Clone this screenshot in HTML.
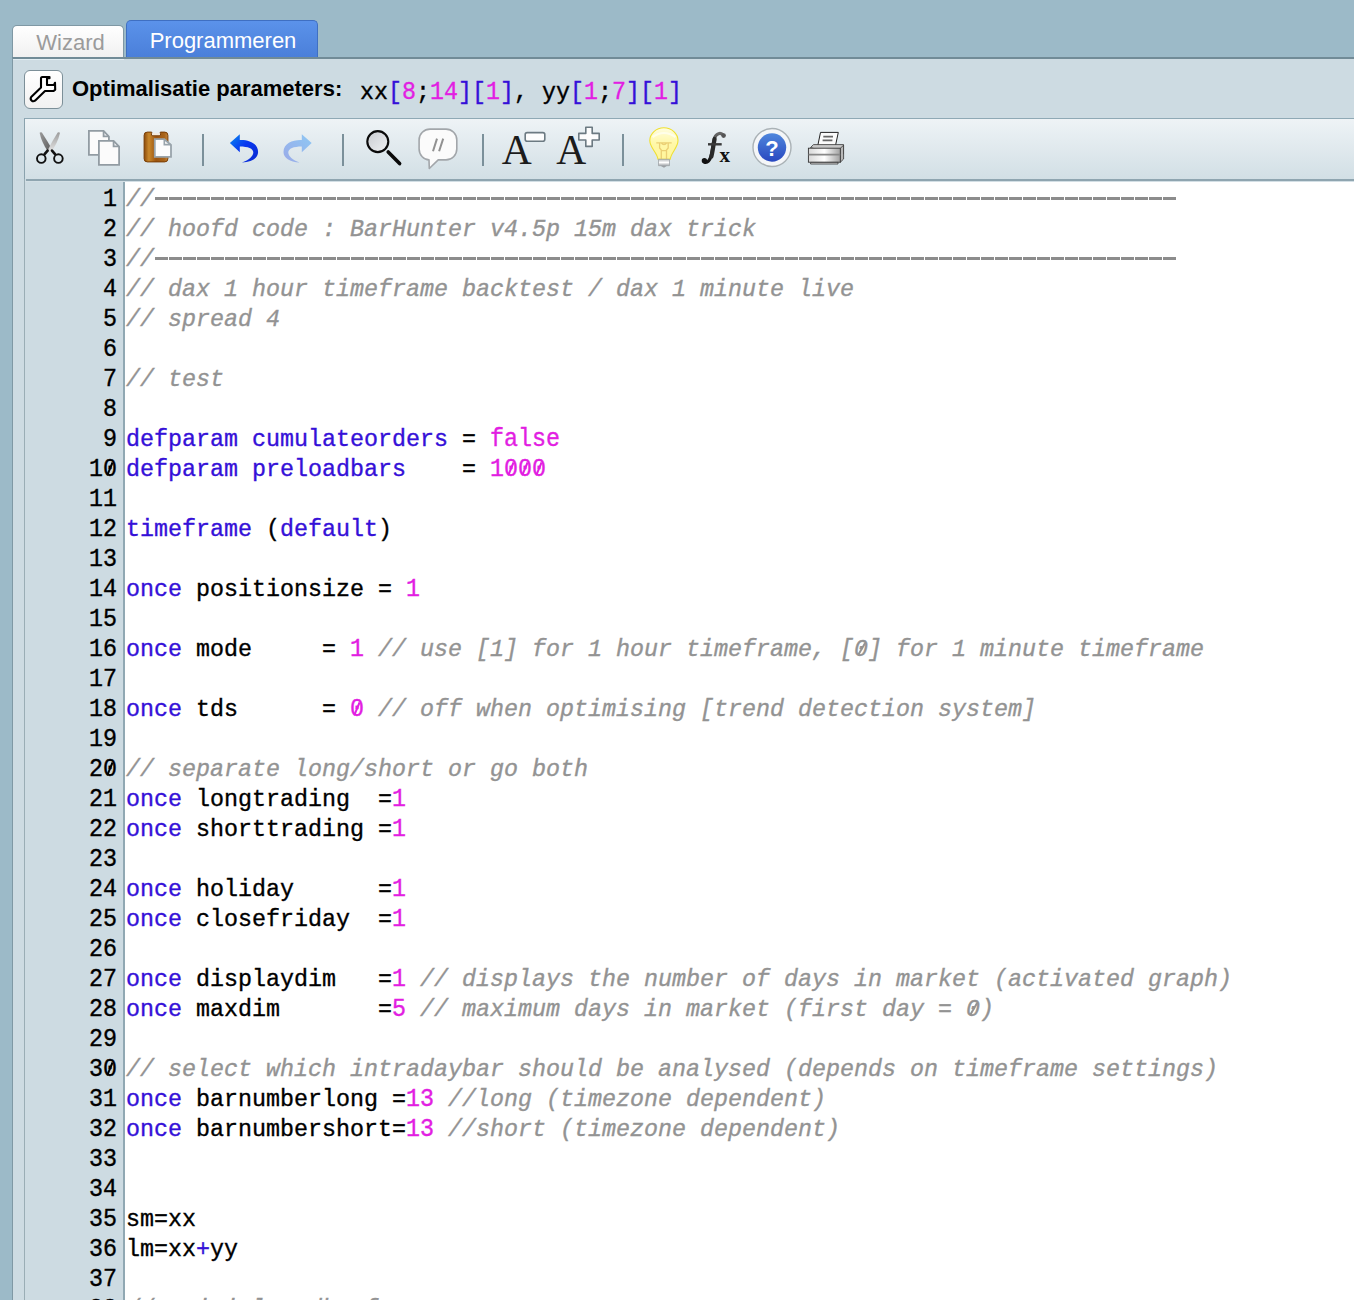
<!DOCTYPE html>
<html><head><meta charset="utf-8">
<style>
html,body{margin:0;padding:0;}
body{width:1354px;height:1300px;overflow:hidden;background:#9cbac8;position:relative;font-family:"Liberation Sans",sans-serif;}
.abs{position:absolute;}
#panel{left:12px;top:57px;right:0;bottom:0;background:#cddbe2;border-left:1px solid #7f98a4;border-top:2px solid #718b97;}
.tab{position:absolute;box-sizing:border-box;border-radius:5px 5px 0 0;text-align:center;font-size:22px;}
#tab1{left:12px;top:25px;width:112px;height:33px;background:linear-gradient(#ffffff,#f0f0f0);border:1px solid #7f98a4;border-bottom:none;color:#9b9b9b;line-height:34px;padding-left:5px;}
#tab2{left:126px;top:20px;width:192px;height:38px;background:linear-gradient(#5b92ea,#4a7fd9);border:1px solid #3f6fc2;border-bottom:none;color:#fff;line-height:40px;padding-left:2px;}
#wrench{left:24px;top:70px;width:39px;height:39px;box-sizing:border-box;border:1px solid #7c8f98;border-radius:6px;background:linear-gradient(#ffffff,#f1f1f1);}
#optlbl{left:72px;top:76px;font-size:22px;font-weight:bold;color:#000;white-space:pre;}
#params{left:360px;top:79.5px;font-family:"Liberation Mono",monospace;font-size:23.33px;white-space:pre;color:#000;}
#toolbar{left:24px;top:118px;right:0;height:61px;box-sizing:border-box;border-top:1px solid #8fa9b5;border-left:1px solid #8aa2ad;background:linear-gradient(#eef3f6,#d2dfe5);}
#tbline{left:26px;top:179px;right:0;height:2px;background:#8fa5b0;}
#tbline2{left:25px;top:181px;right:0;height:1px;background:#d3dfe5;}
#gutter{left:24px;top:179px;width:99px;bottom:0;background:#cddbe2;border-left:1px solid #9aadb5;box-sizing:border-box;}
#gline{left:123px;top:182px;width:2px;bottom:0;background:#90a8b3;}
#editor{left:125px;top:182px;right:0;bottom:0;background:#fff;}
.sep{position:absolute;top:134px;width:2px;height:32px;background:#7b909a;}
#nums{left:25px;top:184.5px;width:92px;text-align:right;font-family:"Liberation Mono",monospace;font-size:23.33px;color:#000;}
#code{left:126px;top:184.5px;font-family:"Liberation Mono",monospace;font-size:23.33px;color:#000;}
.ln{height:30px;line-height:30px;white-space:pre;}
.k{color:#3510d8;}
.n{color:#e21ee2;display:inline-block;transform:scaleY(1.08);transform-origin:0 72%;}
.z{position:relative;display:inline-block;}
.z::after{content:"";position:absolute;left:6.1px;top:7.5px;width:1.8px;height:12.5px;background:currentColor;transform:rotate(24deg);}
.c .z::after{left:7px;transform:rotate(30deg);}
#nums .ln{transform:scaleY(1.08);transform-origin:0 71%;}
.c{color:#939393;font-style:italic;}
.d{display:inline-block;vertical-align:top;width:1022px;height:30px;background-image:linear-gradient(90deg,#8c8c8c 12.6px,transparent 12.6px);background-size:14px 2.5px;background-position:1px 12.5px;background-repeat:repeat-x;}
#code,#nums,#params{-webkit-text-stroke:0.35px currentColor;}
</style></head><body>
<div id="tab1" class="tab">Wizard</div>
<div id="tab2" class="tab">Programmeren</div>
<div id="panel" class="abs"></div>
<div class="abs" style="left:13px;top:59px;width:111px;height:1px;background:#e2eef3"></div>
<div id="wrench" class="abs"><svg width="39" height="39" viewBox="0 0 39 39" style="position:absolute;left:-1px;top:-1px"><path d="M18.3 7 H25.5 V8.3 H23 V15 H30 L31 12.8 L31.2 19.6 L29.6 21 H21 L11 30.7 A2.7 2.7 0 0 1 7.2 27 L17 17.5 V8.6 Q17 7 18.3 7 Z" fill="#fff" stroke="#000" stroke-width="2.1" stroke-linejoin="round"/></svg></div>
<div id="optlbl" class="abs">Optimalisatie parameters:</div>
<div id="params" class="abs">xx<span class="k">[</span><span class="n">8</span>;<span class="n">14</span><span class="k">]</span><span class="k">[</span><span class="n">1</span><span class="k">]</span>, yy<span class="k">[</span><span class="n">1</span>;<span class="n">7</span><span class="k">]</span><span class="k">[</span><span class="n">1</span><span class="k">]</span></div>
<div id="gutter" class="abs"></div>
<div id="gline" class="abs"></div>
<div id="editor" class="abs"></div>
<div id="toolbar" class="abs"></div>
<div id="tbline" class="abs"></div>
<div id="tbline2" class="abs"></div>
<div class="sep" style="left:202px"></div>
<div class="sep" style="left:342px"></div>
<div class="sep" style="left:482px"></div>
<div class="sep" style="left:622px"></div>
<svg id="icons" class="abs" style="left:0;top:0" width="900" height="180" viewBox="0 0 900 180">
<defs>
<linearGradient id="gBladeL" x1="0" y1="0" x2="1" y2="1"><stop offset="0" stop-color="#9a9a9a"/><stop offset="1" stop-color="#5a5a5a"/></linearGradient>
<linearGradient id="gBladeR" x1="0" y1="0" x2="0" y2="1"><stop offset="0" stop-color="#9c9c9c"/><stop offset="1" stop-color="#e8e8e8"/></linearGradient>
<linearGradient id="gClip" x1="0" y1="0" x2="1" y2="0"><stop offset="0" stop-color="#8c4a0a"/><stop offset="0.2" stop-color="#c8882c"/><stop offset="0.5" stop-color="#9c5410"/><stop offset="0.85" stop-color="#a8641a"/><stop offset="1" stop-color="#c4843a"/></linearGradient>
<linearGradient id="gUndo" x1="0" y1="0" x2="1" y2="1"><stop offset="0" stop-color="#0a8cf0"/><stop offset="0.45" stop-color="#0838f0"/><stop offset="1" stop-color="#0a2ad0"/></linearGradient>
<linearGradient id="gRedo" x1="0" y1="0" x2="1" y2="1"><stop offset="0" stop-color="#8ec8f4"/><stop offset="1" stop-color="#9aaae8"/></linearGradient>
<linearGradient id="gLens" x1="0" y1="0" x2="1" y2="1"><stop offset="0" stop-color="#c8cbd0"/><stop offset="1" stop-color="#f0f2f4"/></linearGradient>
<linearGradient id="gBulb" x1="0" y1="0" x2="0" y2="1"><stop offset="0" stop-color="#fffde0"/><stop offset="0.5" stop-color="#fff8a8"/><stop offset="1" stop-color="#fff59a"/></linearGradient>
<linearGradient id="gBase" x1="0" y1="0" x2="0" y2="1"><stop offset="0" stop-color="#b8bcc0"/><stop offset="0.5" stop-color="#ffffff"/><stop offset="1" stop-color="#9ea2a6"/></linearGradient>
<linearGradient id="gHelp" x1="0" y1="0" x2="0" y2="1"><stop offset="0" stop-color="#4f86dc"/><stop offset="1" stop-color="#2848c0"/></linearGradient>
<linearGradient id="gPrint" x1="0" y1="0" x2="1" y2="0"><stop offset="0" stop-color="#d8d8d8"/><stop offset="0.5" stop-color="#ffffff"/><stop offset="1" stop-color="#a0a0a0"/></linearGradient>
<linearGradient id="gF" x1="0" y1="0" x2="0" y2="1"><stop offset="0" stop-color="#666"/><stop offset="1" stop-color="#111"/></linearGradient>
</defs>
<!-- scissors -->
<path d="M39.6,132.8 Q40.6,132 41.9,132.6 Q47.6,141.5 51.6,148.6 L48.0,151.8 Q41.6,142.5 39.6,132.8 Z" fill="url(#gBladeL)"/>
<path d="M60.0,132.8 Q59.0,132 57.7,132.6 Q52.0,141.5 47.6,150.4 L50.8,152.6 Q58.0,142.5 60.0,132.8 Z" fill="url(#gBladeR)"/>
<path d="M47.6,150.6 L44.6,154.2" stroke="#111" stroke-width="2.6" stroke-linecap="round"/>
<path d="M52.0,150.6 L55.0,154.2" stroke="#111" stroke-width="2.6" stroke-linecap="round"/>
<circle cx="41.3" cy="158.6" r="4.3" fill="none" stroke="#111" stroke-width="1.9"/>
<circle cx="58.4" cy="158.6" r="4.3" fill="none" stroke="#111" stroke-width="1.9"/>
<!-- copy -->
<path d="M88.9,130.9 H103.6 L108.9,136.6 V154.9 H88.9 Z" fill="#fbfbfb" stroke="#929ca3" stroke-width="1.8"/>
<path d="M103.6,130.9 V136.4 H108.9" fill="none" stroke="#929ca3" stroke-width="1.8"/>
<path d="M98.9,140.9 H113.6 L119.1,146.6 V164.9 H98.9 Z" fill="#fbfbfb" stroke="#929ca3" stroke-width="1.8"/>
<path d="M113.6,140.9 V146.4 H119.1" fill="none" stroke="#929ca3" stroke-width="1.8"/>
<!-- paste -->
<path d="M147.3,132.1 H151.2 Q152.6,132.1 151.6,133.6 Q150.6,135.6 152.8,135.8 H159.2 Q161.4,135.6 160.4,133.6 Q159.4,132.1 160.8,132.1 H164.7 Q167.9,132.1 167.9,135.3 V158.7 Q167.9,161.9 164.7,161.9 H147.3 Q144.1,161.9 144.1,158.7 V135.3 Q144.1,132.1 147.3,132.1 Z" fill="url(#gClip)" stroke="#7a3e06" stroke-width="1"/><path d="M152.4,133.2 H159.6 V135 H152.4 Z" fill="#f6eadc" opacity="0.9"/>
<path d="M154.8,139.2 H164.3 L171,145 V156.8 H154.8 Z" fill="#fcfcfc" stroke="#99a4ab" stroke-width="1.8"/>
<path d="M164.3,139.2 V144.6 H171" fill="none" stroke="#99a4ab" stroke-width="1.6"/>
<!-- undo -->
<path d="M229.9,143.1 L239.8,134.2 L239.8,140 C248,139.5 258.1,143 258.1,152 C258.1,158 252,162 241.9,162.5 C249,160 253.3,156 253.3,152.5 C253.3,148.5 248,146.5 239.8,146.5 L239.8,152.3 Z" fill="url(#gUndo)"/>
<!-- redo -->
<path transform="translate(541.6,0) scale(-1,1)" d="M229.9,143.1 L239.8,134.2 L239.8,140 C248,139.5 258.1,143 258.1,152 C258.1,158 252,162 241.9,162.5 C249,160 253.3,156 253.3,152.5 C253.3,148.5 248,146.5 239.8,146.5 L239.8,152.3 Z" fill="url(#gRedo)"/>
<!-- search -->
<circle cx="377.8" cy="141.6" r="10.5" fill="url(#gLens)" stroke="#0a0a0a" stroke-width="2.1"/>
<path d="M388.2,152 L399.6,163.6" stroke="#0a0a0a" stroke-width="3.6" stroke-linecap="round"/>
<!-- comment -->
<path d="M429,159.9 C424,159.9 419.1,155 419.1,149 V139.9 C419.1,134 424,129.1 430,129.1 H446 C452,129.1 456.8,134 456.8,140 V149 C456.8,155 452,159.9 446,159.9 H438.2 L429.3,168.5 Z" fill="#fbfbfb" stroke="#a2a6aa" stroke-width="1.6" stroke-linejoin="round"/>
<path d="M437,138.6 L433,151.3 M443.2,138.6 L439.1,151.3" stroke="#919191" stroke-width="2"/>
<!-- A- -->
<text x="501.8" y="164.3" font-family="Liberation Serif" font-size="41.5" fill="#1c1c1c">A</text>
<rect x="525.2" y="132.6" width="19.6" height="8.6" rx="2" fill="#fdfdfd" stroke="#6c7a82" stroke-width="1.6"/>
<!-- A+ -->
<text x="556.2" y="164.3" font-family="Liberation Serif" font-size="41.5" fill="#1c1c1c">A</text>
<path d="M585.8,127.3 H592.2 V133.4 H599.2 V140 H592.2 V146.4 H585.8 V140 H578.8 V133.4 H585.8 Z" fill="#fdfdfd" stroke="#6c7a82" stroke-width="1.6" stroke-linejoin="round"/>
<!-- bulb -->
<path d="M658,159.3 C657.2,152.5 649.8,148 649.8,140.6 A14.1,12.8 0 0 1 678,140.6 C678,148 670.8,152.5 670.2,159.3 Z" fill="url(#gBulb)" stroke="#efe030" stroke-width="1.1"/>
<path d="M652.5,137 Q664,129 675.5,137" fill="none" stroke="#fffff0" stroke-width="2.2" opacity="0.8"/>
<path d="M656.3,142.8 H671.7 M659.6,142.8 V148 L661.3,150 V159 M668.2,142.8 V148 L666.5,150 V159 M661.3,150.6 H666.5 M661,142.6 Q664,146.6 667,142.6" fill="none" stroke="#ebcf74" stroke-width="1.3"/>
<path d="M658.5,159.3 H669.5 V165.7 H658.5 Z" fill="url(#gBase)" stroke="#a0a4a8" stroke-width="0.8"/>
<path d="M660.5,165.7 H667 L664,167.8 Z" fill="#9a9ea2"/>
<!-- fx -->
<path d="M722.8,134.6 C720.5,132.6 716.4,133.2 714.8,137.4 C713.2,141.6 712.6,150 711.2,155.4 C709.8,160.8 707.4,163 704.6,162.2" fill="none" stroke="url(#gF)" stroke-width="3.2" stroke-linecap="round"/><path d="M714.6,139 C713.4,145 712.8,151 711.4,156.5" fill="none" stroke="#2a2a2a" stroke-width="4.2" stroke-linecap="round"/><circle cx="723.6" cy="135.6" r="2.3" fill="#555"/><circle cx="704.4" cy="160.8" r="2.7" fill="#111"/><rect x="708" y="143.1" width="13.7" height="2.4" fill="#3a3a3a"/>
<text x="719.4" y="162" font-family="Liberation Serif" font-weight="bold" font-size="21" fill="#111">x</text>
<!-- help -->
<circle cx="772" cy="147.5" r="19" fill="#f4f6f8" stroke="#aab2b6" stroke-width="1.4"/>
<circle cx="772" cy="147.5" r="14.2" fill="url(#gHelp)"/>
<text x="772" y="156.3" text-anchor="middle" font-family="Liberation Sans" font-weight="bold" font-size="22" fill="#fff">?</text>
<!-- printer -->
<path d="M820.5,132.4 H838.3 L835.5,145.5 H817.8 Z" fill="#fbfbfb" stroke="#222" stroke-width="1"/>
<path d="M823.3,136.6 H833 M822.6,140.4 H832.4" stroke="#666" stroke-width="1.6"/>
<path d="M810.5,147.5 L813.5,144.6 H843.5 V154 L840.5,156.5 Z" fill="#c8c8c8" stroke="#333" stroke-width="0.8"/>
<rect x="808.4" y="148.2" width="32" height="14" fill="url(#gPrint)" stroke="#333" stroke-width="0.9"/>
<path d="M840.4,148.2 L843.6,145.2 V159 L840.4,162.2 Z" fill="#b8b8b8" stroke="#333" stroke-width="0.8"/>
<path d="M808.6,154.6 H840.2" stroke="#888" stroke-width="1.8"/>
<path d="M810.6,162.4 H838 V164 H810.6 Z" fill="#ddd" stroke="#333" stroke-width="0.8"/>
</svg>

<div id="nums" class="abs">
<div class="ln">1</div>
<div class="ln">2</div>
<div class="ln">3</div>
<div class="ln">4</div>
<div class="ln">5</div>
<div class="ln">6</div>
<div class="ln">7</div>
<div class="ln">8</div>
<div class="ln">9</div>
<div class="ln">1<span class="z">0</span></div>
<div class="ln">11</div>
<div class="ln">12</div>
<div class="ln">13</div>
<div class="ln">14</div>
<div class="ln">15</div>
<div class="ln">16</div>
<div class="ln">17</div>
<div class="ln">18</div>
<div class="ln">19</div>
<div class="ln">2<span class="z">0</span></div>
<div class="ln">21</div>
<div class="ln">22</div>
<div class="ln">23</div>
<div class="ln">24</div>
<div class="ln">25</div>
<div class="ln">26</div>
<div class="ln">27</div>
<div class="ln">28</div>
<div class="ln">29</div>
<div class="ln">3<span class="z">0</span></div>
<div class="ln">31</div>
<div class="ln">32</div>
<div class="ln">33</div>
<div class="ln">34</div>
<div class="ln">35</div>
<div class="ln">36</div>
<div class="ln">37</div>
<div class="ln">38</div>
</div>
<div id="code" class="abs">
<div class="ln"><span class="c">//</span><span class="d"></span></div>
<div class="ln"><span class="c">// hoofd code : BarHunter v4.5p 15m dax trick</span></div>
<div class="ln"><span class="c">//</span><span class="d"></span></div>
<div class="ln"><span class="c">// dax 1 hour timeframe backtest / dax 1 minute live</span></div>
<div class="ln"><span class="c">// spread 4</span></div>
<div class="ln"></div>
<div class="ln"><span class="c">// test</span></div>
<div class="ln"></div>
<div class="ln"><span class="k">defparam</span> <span class="k">cumulateorders</span> = <span class="n">false</span></div>
<div class="ln"><span class="k">defparam</span> <span class="k">preloadbars</span>    = <span class="n">1<span class="z">0</span><span class="z">0</span><span class="z">0</span></span></div>
<div class="ln"></div>
<div class="ln"><span class="k">timeframe</span> (<span class="k">default</span>)</div>
<div class="ln"></div>
<div class="ln"><span class="k">once</span> positionsize = <span class="n">1</span></div>
<div class="ln"></div>
<div class="ln"><span class="k">once</span> mode     = <span class="n">1</span> <span class="c">// use [1] for 1 hour timeframe, [<span class="z">0</span>] for 1 minute timeframe</span></div>
<div class="ln"></div>
<div class="ln"><span class="k">once</span> tds      = <span class="n"><span class="z">0</span></span> <span class="c">// off when optimising [trend detection system]</span></div>
<div class="ln"></div>
<div class="ln"><span class="c">// separate long/short or go both</span></div>
<div class="ln"><span class="k">once</span> longtrading  =<span class="n">1</span></div>
<div class="ln"><span class="k">once</span> shorttrading =<span class="n">1</span></div>
<div class="ln"></div>
<div class="ln"><span class="k">once</span> holiday      =<span class="n">1</span></div>
<div class="ln"><span class="k">once</span> closefriday  =<span class="n">1</span></div>
<div class="ln"></div>
<div class="ln"><span class="k">once</span> displaydim   =<span class="n">1</span> <span class="c">// displays the number of days in market (activated graph)</span></div>
<div class="ln"><span class="k">once</span> maxdim       =<span class="n">5</span> <span class="c">// maximum days in market (first day = <span class="z">0</span>)</span></div>
<div class="ln"></div>
<div class="ln"><span class="c">// select which intradaybar should be analysed (depends on timeframe settings)</span></div>
<div class="ln"><span class="k">once</span> barnumberlong =<span class="n">13</span> <span class="c">//long (timezone dependent)</span></div>
<div class="ln"><span class="k">once</span> barnumbershort=<span class="n">13</span> <span class="c">//short (timezone dependent)</span></div>
<div class="ln"></div>
<div class="ln"></div>
<div class="ln">sm=xx</div>
<div class="ln">lm=xx<span class="k">+</span>yy</div>
<div class="ln"></div>
<div class="ln"><span class="c">// animial vadhe frames</span></div>
</div>
</body></html>
